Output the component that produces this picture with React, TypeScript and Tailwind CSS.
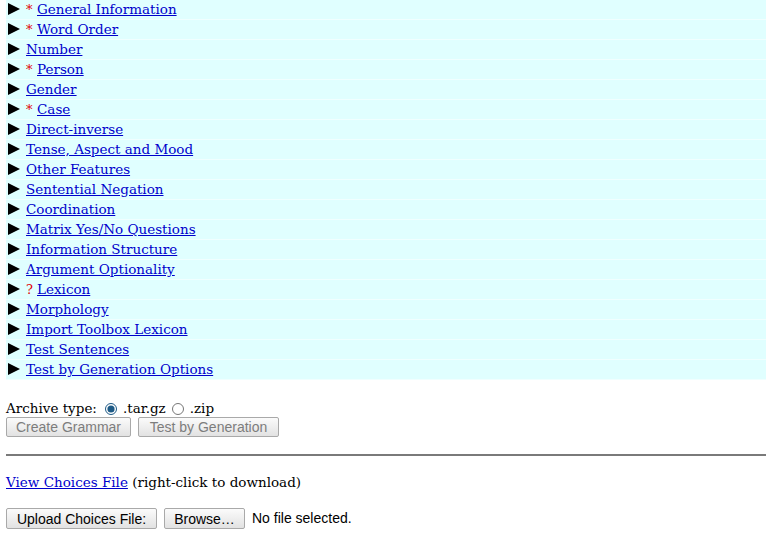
import React from 'react'

const sections = [
	{ name: 'General Information', mark: '*' },
	{ name: 'Word Order', mark: '*' },
	{ name: 'Number' },
	{ name: 'Person', mark: '*' },
	{ name: 'Gender' },
	{ name: 'Case', mark: '*' },
	{ name: 'Direct-inverse' },
	{ name: 'Tense, Aspect and Mood' },
	{ name: 'Other Features' },
	{ name: 'Sentential Negation' },
	{ name: 'Coordination' },
	{ name: 'Matrix Yes/No Questions' },
	{ name: 'Information Structure' },
	{ name: 'Argument Optionality' },
	{ name: 'Lexicon', mark: '?' },
	{ name: 'Morphology' },
	{ name: 'Import Toolbox Lexicon' },
	{ name: 'Test Sentences' },
	{ name: 'Test by Generation Options' },
]

const serif = { fontFamily: '"DejaVu Serif", "Liberation Serif", serif' }

const Button = ({ label, disabled, w }: { label: string; disabled?: boolean; w: string }) => (
	<button
		className={
			w + ' h-[20px] border border-[#a9a9a9] rounded-[2px] bg-gradient-to-b from-[#fbfbfb] to-[#e2e2e2] text-[14px] leading-none font-["Liberation_Sans",sans-serif] ' +
			(disabled ? 'text-[#7d7d7d]' : 'text-black')
		}
	>
		{label}
	</button>
)

const App = () => {
	return (
		<div className="w-[770px] h-[534px] bg-white pl-[6px] pr-[4px] text-black overflow-hidden" style={serif}>
			<div className="flex flex-col">
				{sections.map(s => (
					<div key={s.name} className="h-[20px] bg-[#e0ffff] border-b border-[#f0ffff] flex items-center text-[13.5px] leading-none">
						<svg width="12" height="12" viewBox="0 0 12 12" className="ml-[2px] mr-[6px] mb-[1px]">
							<path d="M0 0 L12 6 L0 12 Z" fill="#000" />
						</svg>
						{s.mark && <span className="text-[#e00000] mr-[5px] text-[13px] w-[6px]">{s.mark}</span>}
						<a href="#" className="text-[#0000cc] underline">{s.name}</a>
					</div>
				))}
			</div>
			<div className="mt-[20px] flex items-center text-[13.5px] h-[17px]">
				<span>Archive type:</span>
				<input type="radio" name="arch" defaultChecked className="ml-[8px] mr-[6px] w-[12px] h-[12px] accent-[#1e5a86]" />
				<span>.tar.gz</span>
				<input type="radio" name="arch" className="ml-[6px] mr-[6px] w-[12px] h-[12px]" />
				<span>.zip</span>
			</div>
			<div className="flex gap-[7px]">
				<Button label="Create Grammar" disabled w="w-[125px]" />
				<Button label="Test by Generation" disabled w="w-[141px]" />
			</div>
			<hr className="mt-[17px] border-t-2 border-[#7a7a7a]" />
			<div className="mt-[17px] text-[13.5px] h-[18px] leading-[18px]">
				<a href="#" className="text-[#0000cc] underline">View Choices File</a> (right-click to download)
			</div>
			<div className="mt-[17px] flex items-center gap-[7px]">
				<Button label="Upload Choices File:" w="w-[151px] h-[21px]" />
				<Button label="Browse…" w="w-[81px] h-[21px]" />
				<span className="text-[14px] font-['Liberation_Sans',sans-serif]">No file selected.</span>
			</div>
		</div>
	)
}

export default App
